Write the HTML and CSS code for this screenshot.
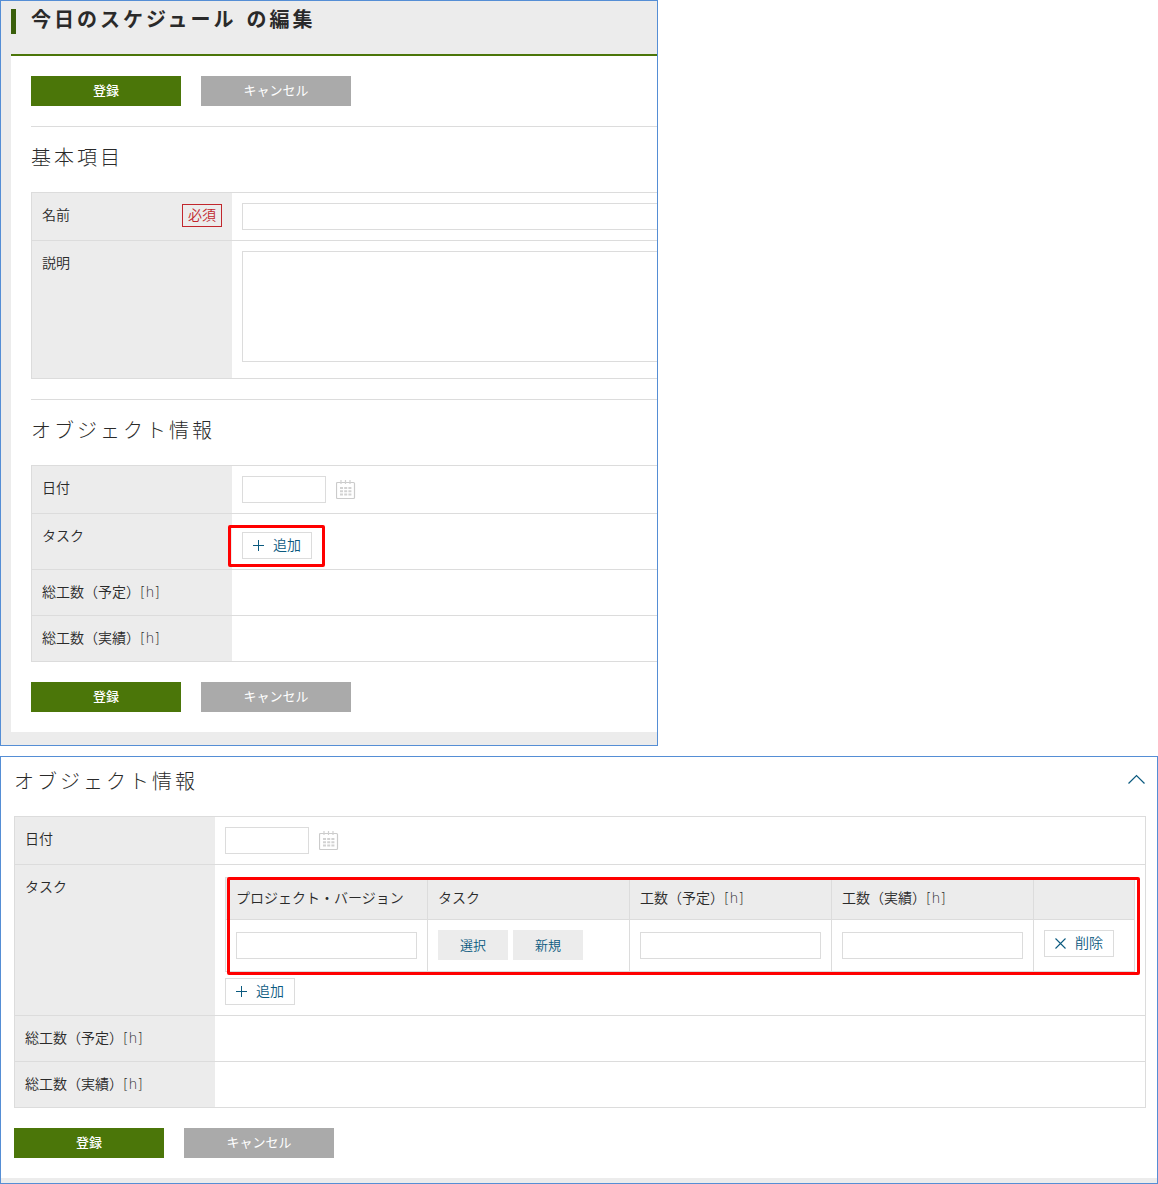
FILE: index.html
```html
<!DOCTYPE html>
<html lang="ja">
<head>
<meta charset="utf-8">
<meta name="viewport" content="width=device-width, initial-scale=1">
<title>今日のスケジュール の編集</title>
<link rel="stylesheet" href="styles.css">
</head>
<body>
<svg class="sprite" aria-hidden="true">
  <symbol id="calendar" viewBox="0 0 20 20">
    <rect x=".5" y="2.500" width="18" height="16" rx="1" fill="none" stroke="#cbcbcb" stroke-width="1.200"/>
    <path d="M5 0v4M9.500 0v4M14 0v4" stroke="#d0d0d0" stroke-width="1.200"/>
    <path d="M4 8h11.500M4 11.300h11.500M4 14.600h11.500" stroke="#d2d2d2" stroke-width="2" stroke-dasharray="3 1.200"/>
  </symbol>
  <symbol id="plus" viewBox="0 0 12 12"><path d="M0 5.500h11M5.500 0v11" stroke="#0b5a7f" stroke-width="1"/></symbol>
  <symbol id="cross" viewBox="0 0 12 12"><path d="M.5 .5l10 10M10.500 .5l-10 10" stroke="#0b5a7f" stroke-width="1.1"/></symbol>
</svg>
<main class="page">
  <section class="frame frame--edit">
    <header class="title"><h1 class="title__text">今日のスケジュール の編集</h1></header>
    <form class="sheet">
      <div class="actions">
        <button type="button" class="btn btn--primary">登録</button>
        <button type="button" class="btn btn--cancel">キャンセル</button>
      </div>
      <h2 class="heading heading--ruled">基本項目</h2>
      <table class="form">
        <tr>
          <th scope="row"><div class="form__label"><label for="name">名前</label><span class="required">必須</span></div></th>
          <td><input class="field" id="name" type="text"></td>
        </tr>
        <tr>
          <th scope="row"><label for="description">説明</label></th>
          <td><textarea class="field field--area" id="description"></textarea></td>
        </tr>
      </table>
      <h2 class="heading heading--ruled">オブジェクト情報</h2>
      <table class="form">
        <tr>
          <th scope="row"><label for="date">日付</label></th>
          <td><div class="date"><input class="field field--date" id="date" type="text"><button type="button" class="icon-btn" aria-label="カレンダー"><svg class="calendar"><use href="#calendar"/></svg></button></div></td>
        </tr>
        <tr>
          <th scope="row">タスク</th>
          <td class="form__tasks form__tasks--empty"><div class="marked marked--button"><button type="button" class="mini"><svg class="mini__icon"><use href="#plus"/></svg>追加</button></div></td>
        </tr>
        <tr><th scope="row">総工数（予定）[h]</th><td></td></tr>
        <tr><th scope="row">総工数（実績）[h]</th><td></td></tr>
      </table>
      <div class="actions">
        <button type="button" class="btn btn--primary">登録</button>
        <button type="button" class="btn btn--cancel">キャンセル</button>
      </div>
    </form>
  </section>

  <section class="frame frame--object">
    <form class="object">
      <div class="object__head">
        <h2 class="heading">オブジェクト情報</h2>
        <button type="button" class="icon-btn" aria-label="折りたたむ"><svg class="chevron" viewBox="0 0 18 10"><path d="M.5 9.500L8.500 1.500L16.500 9.500" fill="none" stroke="#0b5a7f" stroke-width="1.2"/></svg></button>
      </div>
      <table class="form form--closed">
        <tr>
          <th scope="row"><label for="date2">日付</label></th>
          <td><div class="date"><input class="field field--date" id="date2" type="text"><button type="button" class="icon-btn" aria-label="カレンダー"><svg class="calendar"><use href="#calendar"/></svg></button></div></td>
        </tr>
        <tr>
          <th scope="row">タスク</th>
          <td class="form__tasks">
            <div class="marked marked--table">
              <table class="tasks">
                <thead>
                  <tr><th scope="col">プロジェクト・バージョン</th><th scope="col">タスク</th><th scope="col">工数（予定）[h]</th><th scope="col">工数（実績）[h]</th><th class="tasks__last"></th></tr>
                </thead>
                <tbody>
                  <tr>
                    <td><input class="field" type="text" aria-label="プロジェクト・バージョン"></td>
                    <td class="tasks__top"><div class="choices"><button type="button" class="choice">選択</button><button type="button" class="choice">新規</button></div></td>
                    <td><input class="field" type="text" aria-label="工数（予定）"></td>
                    <td><input class="field" type="text" aria-label="工数（実績）"></td>
                    <td class="tasks__top"><button type="button" class="mini"><svg class="mini__icon"><use href="#cross"/></svg>削除</button></td>
                  </tr>
                </tbody>
              </table>
            </div>
            <button type="button" class="mini"><svg class="mini__icon"><use href="#plus"/></svg>追加</button>
          </td>
        </tr>
        <tr><th scope="row">総工数（予定）[h]</th><td></td></tr>
        <tr><th scope="row">総工数（実績）[h]</th><td></td></tr>
      </table>
      <div class="actions">
        <button type="button" class="btn btn--primary">登録</button>
        <button type="button" class="btn btn--cancel">キャンセル</button>
      </div>
    </form>
  </section>
</main>
</body>
</html>
```
FILE: styles.css
```css
* { box-sizing: border-box; }

body {
  margin: 0;
  background: #fff;
  color: #2a2a2a;
  font: 350 14px/25px "DejaVu Sans", "Noto Sans CJK JP", sans-serif;
}

button, input, textarea { font: inherit; color: inherit; }
button { border: 0; padding: 0; cursor: pointer; }
svg { display: block; }
.sprite { position: absolute; width: 0; height: 0; }

.page {
  display: grid;
  grid-template-columns: 329fr 250fr;
  row-gap: 10px;
}

.frame { border: 1px solid #558ed5; background: #ececec; }
.frame--edit { padding: 8px 0 13px 10px; }
.frame--object { grid-column: 1 / -1; padding-bottom: 5px; }

/* Page title */
.title { padding-bottom: 20px; border-bottom: 2px solid #4b7609; }
.title__text {
  margin: 0;
  padding: 0 0 3px 15px;
  border-left: 5px solid #3a5f0b;
  font-size: 20px;
  line-height: 22px;
  font-weight: 700;
  letter-spacing: 3px;
}

.sheet { padding: 20px 0 20px 20px; background: #fff; }
.object { padding: 0 11px 20px 13px; background: #fff; }
.object__head { display: flex; justify-content: space-between; padding-top: 10px; }
.object__head .icon-btn { align-self: flex-start; margin-top: 7px; }

.heading {
  margin: 0;
  padding-bottom: 19px;
  font-size: 20px;
  line-height: 30px;
  font-weight: 300;
  letter-spacing: 3px;
}
.heading--ruled { margin-top: 20px; padding-top: 16px; border-top: 1px solid #dcdcdc; }

/* Buttons */
.actions { display: flex; gap: 20px; }
.form + .actions { margin-top: 20px; }
.btn { width: 150px; height: 30px; color: #fff; font-size: 13px; line-height: 30px; }
.btn--primary { background: #4b7609; font-weight: 500; }
.btn--cancel { background: #aaa; font-weight: 400; }

.mini {
  display: flex;
  align-items: center;
  gap: 8px;
  width: 70px;
  height: 27px;
  padding-left: 10px;
  border: 1px solid #dcdcdc;
  background: #fff;
  color: #0b5a7f;
}
.mini__icon { width: 12px; height: 12px; }
.icon-btn { background: none; }
.calendar { width: 20px; height: 20px; }
.chevron { width: 18px; height: 10px; }

.choices { display: flex; gap: 5px; }
.choice { width: 70px; height: 30px; background: #ececec; color: #0b5a7f; font-size: 13px; }

/* Form tables */
.form {
  width: 100%;
  table-layout: fixed;
  border-spacing: 0;
  border: solid #dcdcdc;
  border-width: 1px 0 0 1px;
}
.form th, .form td {
  padding: 10px;
  border-bottom: 1px solid #dcdcdc;
  font-weight: 350;
  text-align: left;
  vertical-align: top;
}
.form th { width: 200px; background: #ececec; }
.form td { padding-right: 0; }
.form--closed { border-right-width: 1px; }
.form--closed td { padding-right: 10px; }
.form__label { display: flex; justify-content: space-between; }
.required {
  height: 23px;
  margin-top: 1px;
  padding: 0 5px;
  border: 1px solid #c1272d;
  color: #c1272d;
  line-height: 20px;
}

.field {
  display: block;
  width: 100%;
  height: 27px;
  margin: 0;
  padding: 0 8px;
  border: 1px solid #dcdcdc;
  border-radius: 0;
  background: #fff;
}
.frame--edit .field:not(.field--date) { border-right: 0; }
.field--area { height: 111px; margin-bottom: 6px; resize: none; }
.field--date { width: 84px; }
.date { display: flex; align-items: center; gap: 10px; }

.form .form__tasks { padding-top: 12px; }
.form .form__tasks--empty { padding-top: 18px; }

/* Task rows */
.tasks {
  width: 100%;
  table-layout: fixed;
  border-spacing: 0;
  border: solid #dcdcdc;
  border-width: 1px 0 0 1px;
}
.tasks th, .tasks td { border-right: 1px solid #dcdcdc; }
.tasks th { width: auto; padding: 8px 10px; }
.tasks .tasks__last { width: 101px; }
.tasks td { height: 52px; vertical-align: middle; }
.tasks .tasks__top { vertical-align: top; }

/* Red callout frames laid over the highlighted controls */
.marked { position: relative; width: fit-content; }
.marked::after {
  content: "";
  position: absolute;
  border: 3px solid #f00;
  border-radius: 2px;
  pointer-events: none;
}
.marked--button::after { inset: -7px -13px -8px -14px; }
.marked--table { width: auto; margin-bottom: 6px; }
.marked--table::after { inset: 0 -5px -3px 2px; }
```
